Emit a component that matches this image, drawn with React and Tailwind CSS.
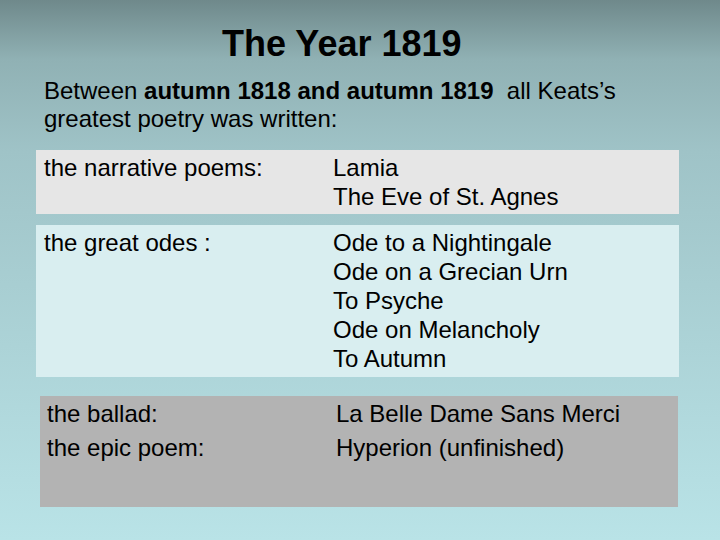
const poems = [
  {
    label: "the narrative poems:",
    titles: ["Lamia", "The Eve of St. Agnes"],
  },
  {
    label: "the great odes :",
    titles: [
      "Ode to a Nightingale",
      "Ode on a Grecian Urn",
      "To Psyche",
      "Ode on Melancholy",
      "To Autumn",
    ],
  },
];

function App() {
  return (
    <main
      className="h-[540px] w-[720px] overflow-hidden text-black bg-[linear-gradient(180deg,#6f898b_0%,#90b1b4_11%,#9fc3c7_28%,#b9e3e7_100%)]"
      style={{ fontFamily: '"Liberation Sans", Arial, sans-serif' }}
    >
      <h1 className="pl-[222px] pt-[24px] text-[36px] font-bold leading-[40px]">
        The Year 1819
      </h1>

      <p className="mt-[13px] pl-[44px] pr-[60px] text-[24px] leading-[28px]">
        Between <b>autumn 1818 and autumn 1819</b>&nbsp; all Keats’s
        <br />
        greatest poetry was written:
      </p>

      <div className="mt-[17px] ml-[36px] w-[643px] flex flex-col gap-[11px]">
        {poems.map((row, index) => (
          <div
            key={row.label}
            className={`flex pl-[8px] pt-[3px] text-[24px] leading-[29px] ${
              index === 0 ? "bg-[#e6e6e6] pb-[3px]" : "bg-[#d9eef0] pb-[4px]"
            }`}
          >
            <div className="w-[289px] shrink-0">{row.label}</div>
            <div className="flex flex-col">
              {row.titles.map((title) => (
                <span key={title}>{title}</span>
              ))}
            </div>
          </div>
        ))}
      </div>

      <div className="mt-[19px] ml-[40px] h-[111px] w-[638px] bg-[#b3b3b3] pl-[7px] pt-[1px] text-[24px] leading-[34px]">
        <div className="flex">
          <span className="w-[289px] shrink-0">the ballad:</span>
          <span>La Belle Dame Sans Merci</span>
        </div>
        <div className="flex">
          <span className="w-[289px] shrink-0">the epic poem:</span>
          <span>Hyperion (unfinished)</span>
        </div>
      </div>
    </main>
  );
}

export default App;
